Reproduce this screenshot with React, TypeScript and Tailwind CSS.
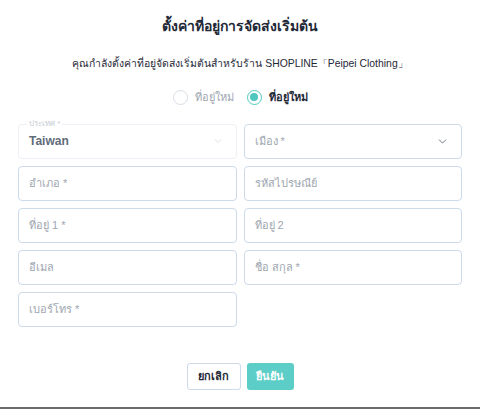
import { ChevronDown } from 'lucide-react';

const Field = ({ label, chevron }: { label: string; chevron?: boolean }) => (
  <div className="flex h-[35px] items-center justify-between rounded-[4px] border border-[#cddaea] bg-white pl-[10px] pr-[12px]">
    <span className="text-[11px] text-[#9ea6b0]">{label}</span>
    {chevron && <ChevronDown size={13} strokeWidth={1.6} className="text-[#5d6673]" />}
  </div>
);

const App = () => {
  return (
    <div
      className="relative h-[409px] w-[480px] overflow-hidden bg-white"
      style={{ fontFamily: '"Liberation Sans", "Noto Sans", sans-serif' }}
    >
      <h1 className="pt-[16px] text-center text-[14px] font-bold leading-[20px] text-[#1f2937]">
        ตั้งค่าที่อยู่การจัดส่งเริ่มต้น
      </h1>
      <p className="mt-[20px] text-center text-[10.4px] leading-[16px] text-[#1f2937]">
        คุณกำลังตั้งค่าที่อยู่จัดส่งเริ่มต้นสำหรับร้าน SHOPLINE「Peipei Clothing」
      </p>

      <div className="mt-[17px] flex items-center justify-center gap-[7px]">
        <span className="h-[15px] w-[15px] rounded-full border border-[#d8dee6]" />
        <span className="mr-[6px] text-[11px] text-[#9ea6b0]">ที่อยู่ใหม่</span>
        <span className="flex h-[15px] w-[15px] items-center justify-center rounded-full border-[1.5px] border-[#4ec7bf]">
          <span className="h-[8px] w-[8px] rounded-full bg-[#4ec7bf]" />
        </span>
        <span className="text-[11px] font-bold text-[#1f2937]">ที่อยู่ใหม่</span>
      </div>

      <div className="mt-[18px] grid grid-cols-2 gap-x-[7px] gap-y-[7px] px-[18px]">
        <div className="relative flex h-[35px] items-center justify-between rounded-[4px] border border-[#edf0f4] pl-[10px] pr-[12px]">
          <span className="absolute -top-[6px] left-[8px] bg-white px-[2px] text-[8px] leading-[10px] text-[#c8ced6]">
            ประเทศ *
          </span>
          <span className="text-[12px] font-bold text-[#5f6b7a]">Taiwan</span>
          <ChevronDown size={12} strokeWidth={1.2} className="text-[#c8ced6]" />
        </div>
        <Field label="เมือง *" chevron />
        <Field label="อำเภอ *" />
        <Field label="รหัสไปรษณีย์" />
        <Field label="ที่อยู่ 1 *" />
        <Field label="ที่อยู่ 2" />
        <Field label="อีเมล" />
        <Field label="ชื่อ สกุล *" />
        <Field label="เบอร์โทร *" />
      </div>

      <div className="mt-[36px] flex justify-center gap-[6px]">
        <button className="h-[27px] w-[54px] rounded-[3px] border border-[#cddaea] bg-white text-[11px] font-bold text-[#1f2937]">
          ยกเลิก
        </button>
        <button className="h-[27px] w-[47px] rounded-[3px] bg-[#5ccdc7] text-[11px] font-bold text-white">
          ยืนยัน
        </button>
      </div>

      <div className="absolute bottom-0 left-0 h-[2px] w-full bg-[#6b6b6b]" />
    </div>
  );
};

export default App;
